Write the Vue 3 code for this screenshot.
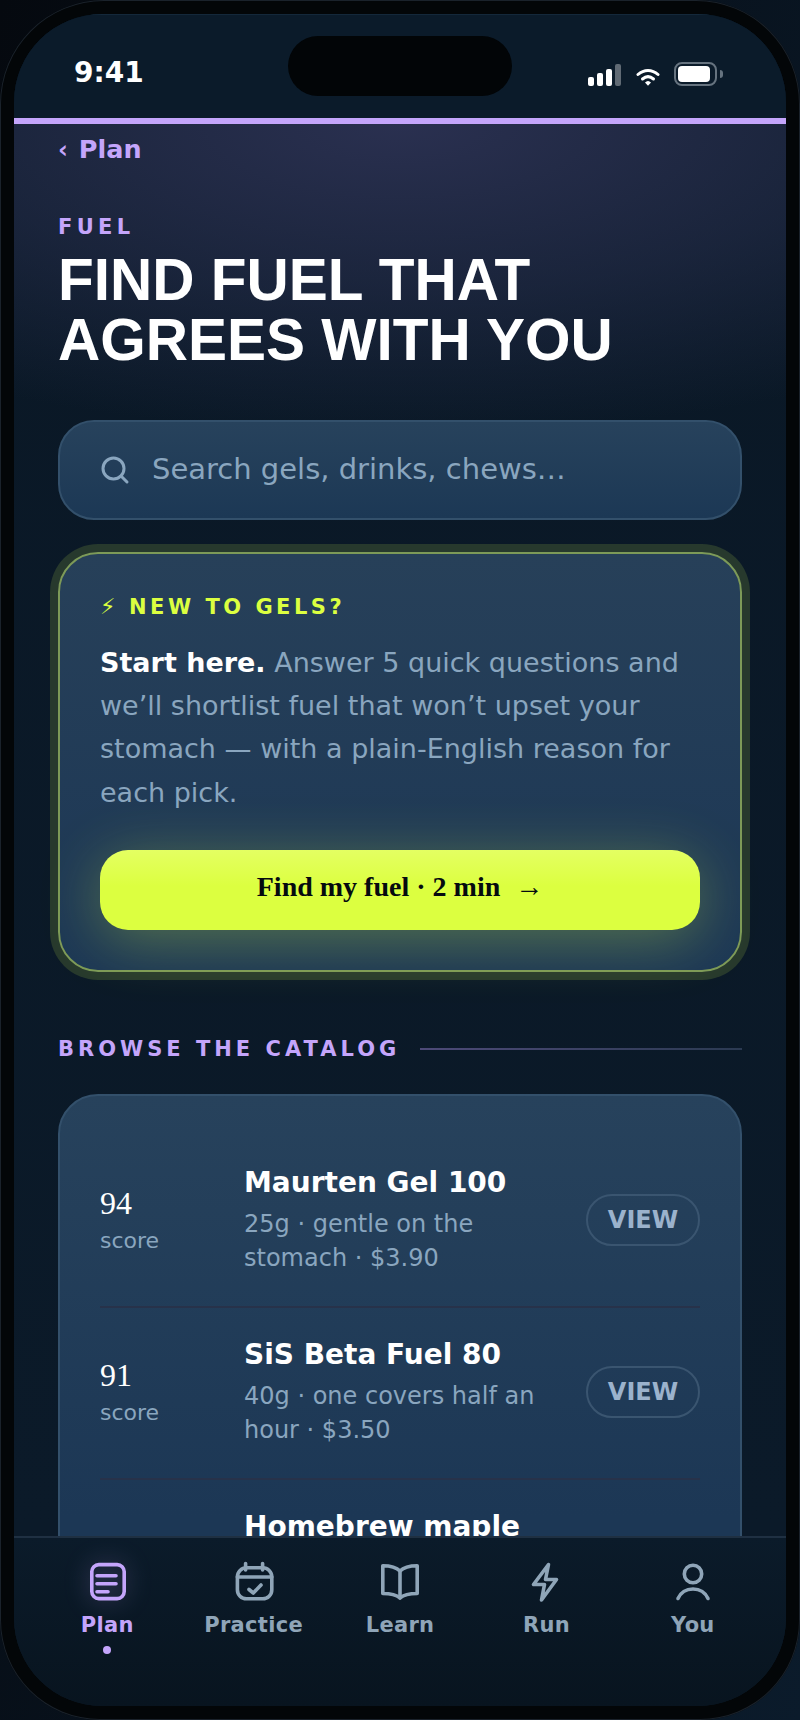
<script setup>
const rows = [
  { score: 94, name: 'Maurten Gel 100', sub: '25g · gentle on the stomach · $3.90' },
  { score: 91, name: 'SiS Beta Fuel 80', sub: '40g · one covers half an hour · $3.50' },
  { name: 'Homebrew maple' }
]
</script>

<template>
  <div class="phone">
    <div class="screen">
      <div class="island"></div>
      <header class="status">
        <span class="time">9:41</span>
        <div class="status-icons">
          <div class="signal"><i class="b1"></i><i class="b2"></i><i class="b3"></i><i class="b4"></i></div>
          <svg class="wifi" width="24" height="20" viewBox="0 0 24 20" fill="none">
            <path d="M2 7.5C8 2 16 2 22 7.5" stroke="#fff" stroke-width="3" stroke-linecap="round"/>
            <path d="M6.5 12C10 9 14 9 17.5 12" stroke="#fff" stroke-width="3" stroke-linecap="round"/>
            <path d="M9 15.5C11 13.4 13 13.4 15 15.5L12 18.8Z" fill="#fff"/>
          </svg>
          <div class="battery"><div class="fill"></div></div>
          <div class="cap"></div>
        </div>
      </header>

      <main class="scroll">
        <a class="back"><span class="chev">‹</span> Plan</a>
        <div class="eyebrow">FUEL</div>
        <h1 class="title">FIND FUEL THAT AGREES WITH YOU</h1>

        <div class="search">
          <svg width="30" height="30" viewBox="0 0 30 30" fill="none" stroke="#8aa6bf" stroke-width="3" stroke-linecap="round">
            <circle cx="13.5" cy="13.5" r="10.5"/>
            <path d="M21.5 21.5L27 27"/>
          </svg>
          <span class="placeholder">Search gels, drinks, chews…</span>
        </div>

        <section class="hero">
          <div class="hero-tag"><span class="bolt">⚡</span>NEW TO GELS?</div>
          <p class="hero-copy"><strong>Start here.</strong> Answer 5 quick questions and we’ll shortlist fuel that won’t upset your stomach — with a plain-English reason for each pick.</p>
          <button class="cta">Find my fuel · 2 min <span class="arrow">→</span></button>
        </section>

        <div class="section-head">
          <span>BROWSE THE CATALOG</span>
          <div class="rule"></div>
        </div>

        <section class="catalog">
          <div v-for="r in rows" :key="r.name" class="row">
            <div class="score"><template v-if="r.score"><div class="num">{{ r.score }}</div><div class="lbl">score</div></template></div>
            <div class="info">
              <div class="name">{{ r.name }}</div>
              <div v-if="r.sub" class="sub">{{ r.sub }}</div>
            </div>
            <div v-if="r.score" class="view">VIEW</div>
          </div>
        </section>
      </main>

      <nav class="tabs">
        <div class="tab active">
          <svg class="glow" width="44" height="44" viewBox="0 0 44 44" fill="none" stroke="currentColor" stroke-width="3.6" stroke-linecap="round" stroke-linejoin="round">
            <rect x="6.8" y="4.6" width="32.4" height="34" rx="7"/>
            <path d="M12 15.800H31M12 23.800H31M12 31.800H23"/>
          </svg>
          <span>Plan</span>
          <i class="dot"></i>
        </div>
        <div class="tab">
          <svg width="44" height="44" viewBox="0 0 44 44" fill="none" stroke="currentColor" stroke-width="3.6" stroke-linecap="round" stroke-linejoin="round">
            <rect x="5.4" y="7.8" width="34.4" height="31" rx="9"/>
            <path d="M13.6 3.6V10M30.6 3.6V10M5.4 17H39.800M17 29.500L21.300 33L29 25"/>
          </svg>
          <span>Practice</span>
        </div>
        <div class="tab">
          <svg width="44" height="44" viewBox="0 0 44 44" fill="none" stroke="currentColor" stroke-width="3.6" stroke-linecap="round" stroke-linejoin="round">
            <path d="M22 11C18 7 12 5.800 4.800 5.800V33.500C12 33.500 18 34.500 22 38C26 34.500 32 33.500 39.200 33.500V5.800C32 5.800 26 7 22 11Z"/>
            <path d="M22 11V38"/>
          </svg>
          <span>Learn</span>
        </div>
        <div class="tab">
          <svg width="44" height="44" viewBox="0 0 44 44" fill="none" stroke="currentColor" stroke-width="3.6" stroke-linecap="round" stroke-linejoin="round">
            <path d="M24.500 4.500L9.500 24.500H20.500L17.500 40L32.500 19.500H21.500Z"/>
          </svg>
          <span>Run</span>
        </div>
        <div class="tab">
          <svg width="44" height="44" viewBox="0 0 44 44" fill="none" stroke="currentColor" stroke-width="3.6" stroke-linecap="round" stroke-linejoin="round">
            <circle cx="22" cy="14" r="8.700"/>
            <path d="M7 38.500C10 32 16 29 22 29C28 29 34 32 37 38.500"/>
          </svg>
          <span>You</span>
        </div>
      </nav>
    </div>
  </div>
</template>

<style>
html, body { margin: 0; background: linear-gradient(105deg, #05090f 0%, #0b1b2b 100%); }
</style>

<style scoped>
.phone {
  width: 800px;
  height: 1720px;
  box-sizing: border-box;
  padding: 14px;
  border-radius: 104px 104px 100px 100px;
  background: #030608;
  box-shadow: inset 0 0 0 1px #1a222b;
  font-family: "DejaVu Sans", sans-serif;
}
.screen {
  position: relative;
  width: 772px;
  height: 1692px;
  border-radius: 88px;
  overflow: hidden;
  display: flex;
  flex-direction: column;
  background: #0a1826;
}
.island {
  position: absolute;
  left: 274px;
  top: 22px;
  width: 224px;
  height: 60px;
  border-radius: 30px;
  background: #020507;
}
.status {
  height: 104px;
  flex: none;
  display: flex;
  justify-content: space-between;
  box-sizing: border-box;
  padding: 40px 63px 0 60px;
  background: #0b1b2a;
  border-top: 1px solid #14283a;
}
.time { font-size: 28px; font-weight: 700; color: #fff; line-height: 36px; }
.status-icons { display: flex; align-items: flex-start; padding-top: 7px; }
.signal { display: flex; align-items: flex-end; gap: 3px; height: 22px; margin-top: 2px; }
.signal i { display: block; width: 6px; border-radius: 2px; background: #fff; }
.b1 { height: 9px; } .b2 { height: 13px; } .b3 { height: 17px; } .b4 { height: 22px; opacity: .35; }
.wifi { margin: 5px 14px 0 15px; }
.battery {
  width: 43px;
  height: 24px;
  box-sizing: border-box;
  border: 2px solid #66737f;
  border-radius: 8px;
  padding: 2px;
}
.fill { width: 32px; height: 16px; background: #fff; border-radius: 4px; }
.cap { width: 3px; height: 8px; margin: 8px 0 0 3px; border-radius: 0 3px 3px 0; background: #66737f; }

.scroll {
  flex: 1;
  min-height: 0;
  overflow: hidden;
  box-sizing: border-box;
  padding: 0 44px;
  border-top: 6px solid #c4a5fb;
  background:
    radial-gradient(ellipse 820px 310px at 50% 0, #2a3050 0%, rgba(40,47,78,.52) 55%, rgba(40,47,78,0) 100%),
    linear-gradient(180deg, #0a1826, #0b1a29);
}
.back {
  display: block;
  margin-top: 9px;
  font-size: 25.500px;
  line-height: 32px;
  font-weight: 700;
  color: #c4a5fb;
}
.chev { font-size: 24px; font-weight: 700; margin-right: 2px; }
.eyebrow {
  margin-top: 48px;
  font-size: 21px;
  line-height: 26px;
  font-weight: 700;
  letter-spacing: 4.300px;
  color: #c4a5fb;
}
.title {
  margin: 10px 0 0;
  font-family: "Liberation Sans", Arial, sans-serif;
  font-size: 58.500px;
  line-height: 60px;
  font-weight: 700;
  color: #fff;
}
.search {
  margin-top: 50px;
  height: 100px;
  box-sizing: border-box;
  display: flex;
  align-items: center;
  gap: 22px;
  padding: 0 40px;
  border: 2px solid #33506b;
  border-radius: 36px;
  background: linear-gradient(180deg, #27425c, #1c3855);
}
.placeholder { font-size: 29px; color: #8aa6bf; margin-top: -2px; }

.hero {
  margin-top: 32px;
  box-sizing: border-box;
  height: 420px;
  padding: 39px 40px 0;
  border: 2px solid #7d9a58;
  border-radius: 40px;
  background: linear-gradient(180deg, #274059, #1c3755);
  box-shadow: 0 0 0 8px #27392d;
}
.hero-tag {
  font-size: 21px;
  line-height: 28px;
  font-weight: 700;
  letter-spacing: 3.500px;
  color: #dcff40;
}
.bolt { display: inline-block; width: 29px; font-size: 22px; letter-spacing: 0; font-weight: 400; }
.hero-copy {
  margin: 20px 0 0;
  font-size: 27px;
  line-height: 43.200px;
  color: #8aa6bf;
}
.hero-copy strong { color: #fff; }
.cta {
  display: block;
  width: 600px;
  height: 80px;
  margin-top: 36px;
  padding: 0 0 5px;
  border: 0;
  border-radius: 28px;
  background: linear-gradient(180deg, #e4ff62 0%, #dcff40 45%);
  box-shadow: 0 10px 60px rgba(220,255,64,.3);
  color: #050a0f;
  font-family: "Liberation Serif", serif;
  font-size: 28px;
  font-weight: 700;
}
.arrow { margin-left: 8px; font-weight: 400; }

.section-head {
  margin-top: 63px;
  display: flex;
  align-items: center;
  gap: 20px;
  font-size: 21px;
  line-height: 28px;
  font-weight: 700;
  letter-spacing: 4px;
  color: #c4a5fb;
}
.rule { flex: 1; height: 2px; background: linear-gradient(90deg, #4d4a78, #2b3a52); }

.catalog {
  margin-top: 31px;
  box-sizing: border-box;
  padding: 40px 40px;
  border: 2px solid #33506b;
  border-radius: 40px;
  background: linear-gradient(180deg, #27425c, #1c3755 420px);
}
.row {
  display: flex;
  align-items: center;
  padding: 31px 0;
  border-bottom: 2px solid #27324a;
}
.score { width: 144px; flex: none; }
.num { font-family: "Liberation Serif", serif; font-size: 32px; line-height: 34px; color: #fff; }
.lbl { margin-top: 6px; font-size: 22px; line-height: 30px; color: #8aa6bf; }
.info { flex: 1; min-width: 0; padding-right: 30px; }
.name { margin-top: -2px; font-size: 28px; line-height: 36px; font-weight: 700; color: #fff; }
.sub { margin-top: 6px; font-size: 24px; line-height: 34px; color: #8aa6bf; }
.view {
  flex: none;
  width: 114px;
  height: 52px;
  margin-top: -2px;
  box-sizing: border-box;
  border: 2px solid #3a5570;
  border-radius: 26px;
  display: flex;
  align-items: center;
  justify-content: center;
  font-size: 24px;
  font-weight: 700;
  color: #9bb2cc;
}

.tabs {
  flex: none;
  height: 170px;
  box-sizing: border-box;
  display: flex;
  padding: 22px 20px 0;
  border-top: 2px solid #1f3042;
  background: linear-gradient(180deg, #0b1b2a, #08141f);
}
.tab {
  flex: 1;
  display: flex;
  flex-direction: column;
  align-items: center;
  color: #8fa5b8;
  font-size: 21px;
  letter-spacing: .3px;
  line-height: 28px;
  font-weight: 700;
}
.tab span { margin-top: 7px; }
.tab.active { color: #c4a5fb; }
.glow { filter: drop-shadow(0 0 12px rgba(196,165,251,.35)); }
.dot { width: 8px; height: 8px; margin-top: 7px; border-radius: 50%; background: #c4a5fb; }
</style>
